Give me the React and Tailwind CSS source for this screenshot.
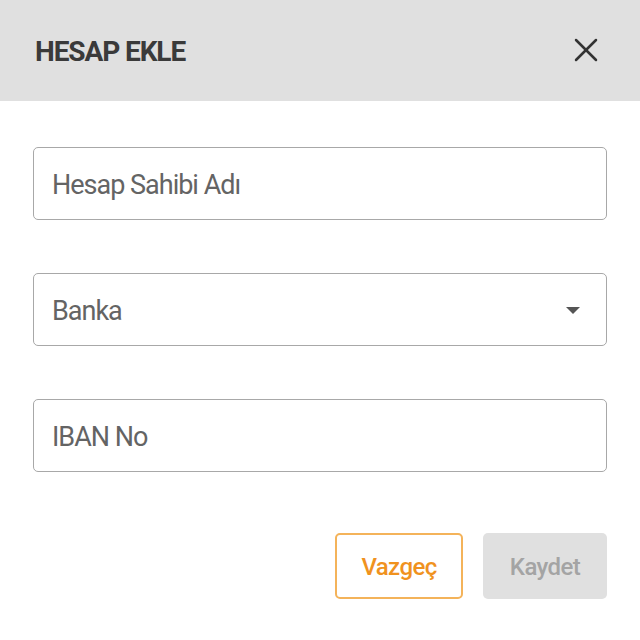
import { X } from 'lucide-react'

const fieldCls = 'w-full h-[73px] rounded-[5px] border border-[#a8a8a8] bg-white px-[18px] pt-[3px] text-[27px] tracking-[-1px] text-[#646464] flex items-center'

export default function App() {
    return (
        <div className="w-[640px] h-[640px] bg-white font-['Roboto',sans-serif]">
            <div className="h-[101px] bg-[#e0e0e0] flex items-center justify-between pl-[35px] pr-[34px]">
                <h1 className="text-[28px] font-bold text-[#3a3a3a] tracking-[-1.1px] mt-[3px]">HESAP EKLE</h1>
                <button type="button" className="text-[#333] mt-[-2px]">
                    <X size={40} strokeWidth={1.5} />
                </button>
            </div>

            <div className="px-[33px] pt-[46px] flex flex-col gap-[53px]">
                <div className={fieldCls}>Hesap Sahibi Adı</div>
                <div className={`${fieldCls} justify-between`}>
                    <span>Banka</span>
                    <svg width="14" height="8" viewBox="0 0 14 8" className="mr-[8px]">
                        <path d="M0 0 L14 0 L7 7 Z" fill="#555" />
                    </svg>
                </div>
                <div className={fieldCls}>IBAN No</div>
            </div>

            <div className="flex justify-end gap-[20px] px-[33px] pt-[61px]">
                <button type="button" className="w-[128px] h-[66px] rounded-[5px] border-2 border-[#f4b35a] pt-[2px] text-[#f0921e] text-[24px] tracking-[-0.6px] font-medium">Vazgeç</button>
                <button type="button" disabled className="w-[124px] h-[66px] rounded-[5px] bg-[#e0e0e0] pt-[2px] text-[#a4a4a4] text-[24px] tracking-[-0.6px] font-medium">Kaydet</button>
            </div>
        </div>
    )
}
